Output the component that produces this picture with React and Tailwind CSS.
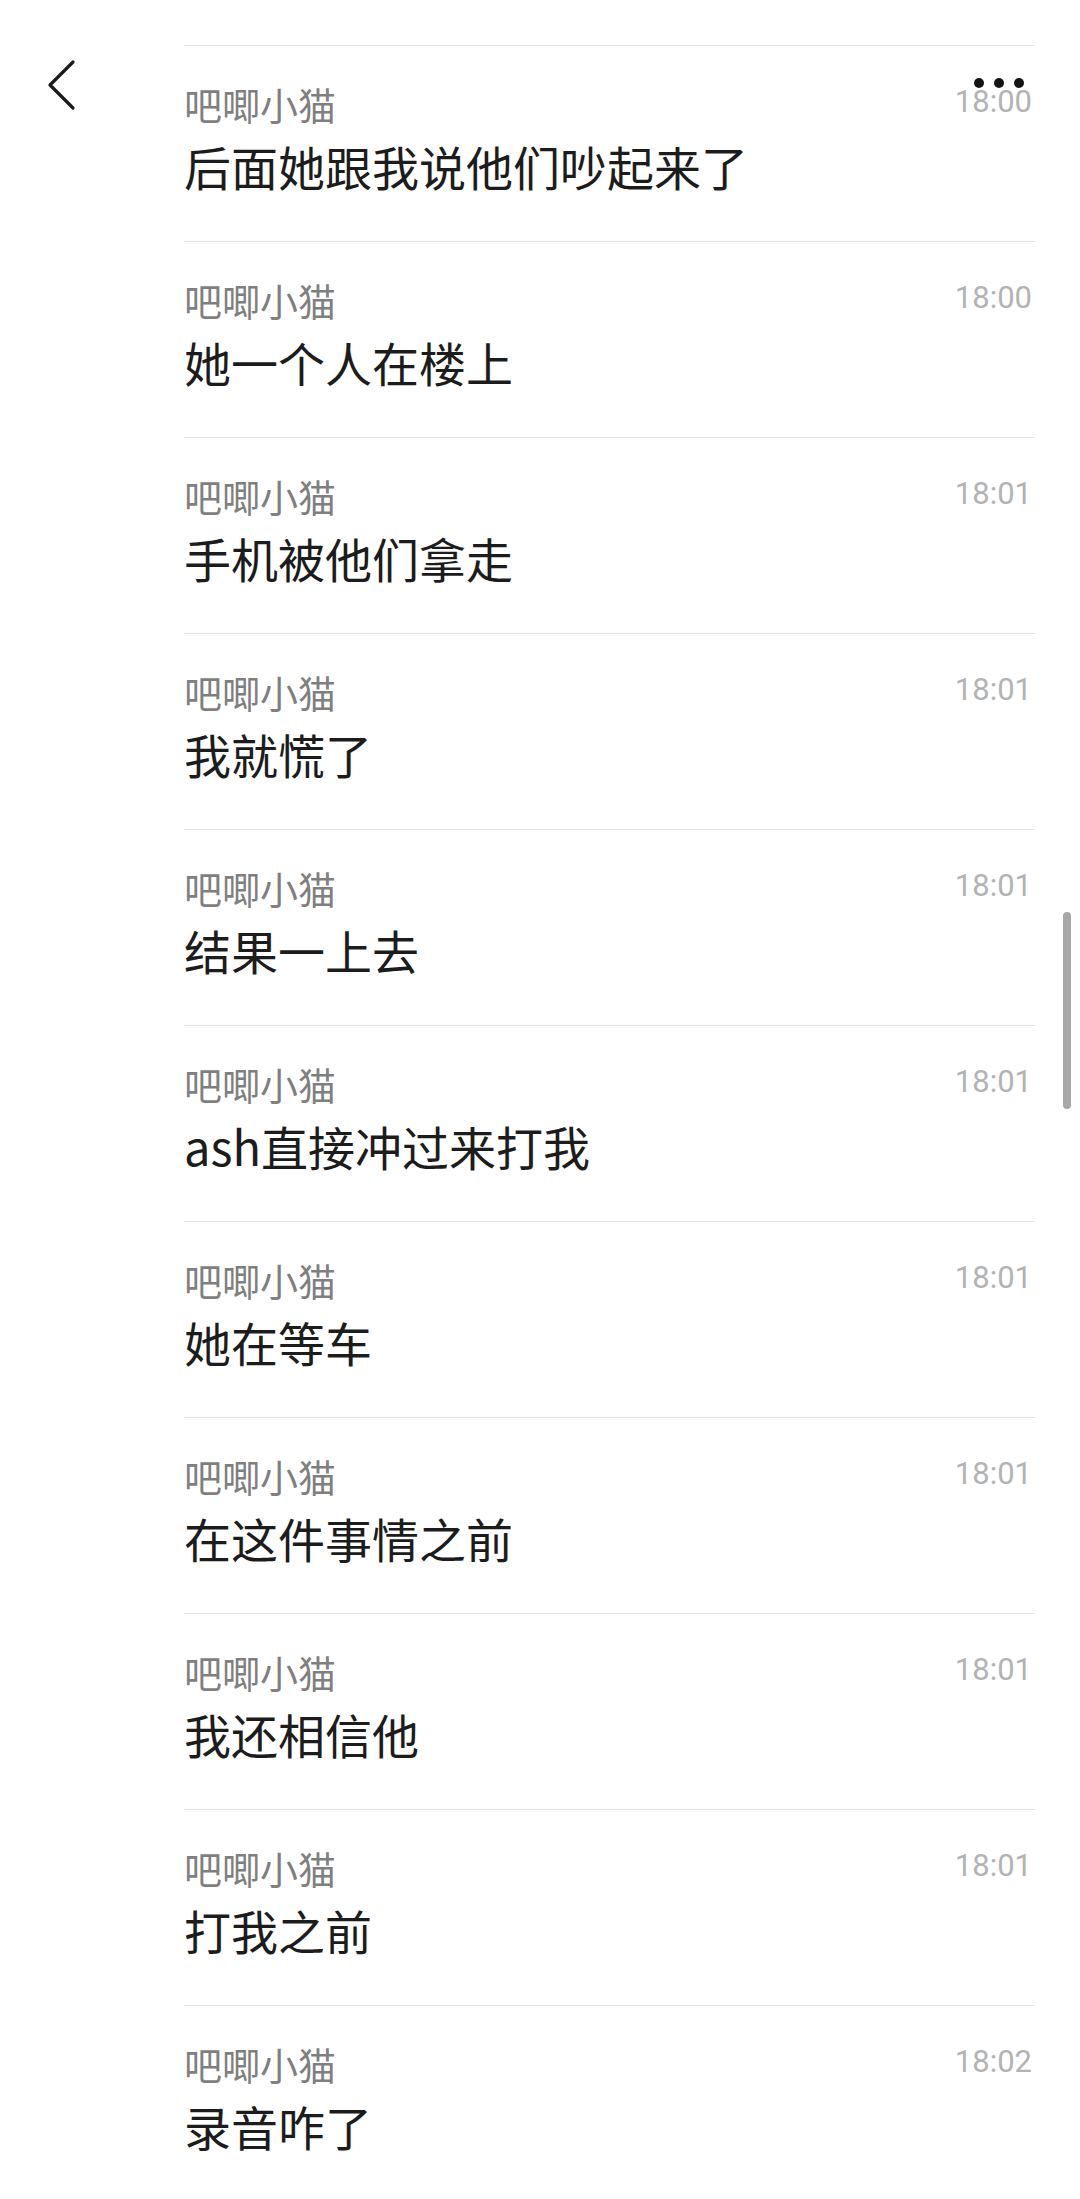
import React from 'react';

const messages = [
  { time: '18:00', text: '后面她跟我说他们吵起来了' },
  { time: '18:00', text: '她一个人在楼上' },
  { time: '18:01', text: '手机被他们拿走' },
  { time: '18:01', text: '我就慌了' },
  { time: '18:01', text: '结果一上去' },
  { time: '18:01', text: 'ash直接冲过来打我' },
  { time: '18:01', text: '她在等车' },
  { time: '18:01', text: '在这件事情之前' },
  { time: '18:01', text: '我还相信他' },
  { time: '18:01', text: '打我之前' },
  { time: '18:02', text: '录音咋了' },
];

function MessageRow({ time, text }) {
  return (
    <div className="h-[196px] border-t border-[#e5e5e5] pt-[36px]">
      <div className="flex justify-between items-start">
        <span className="text-[38px] leading-[44px] text-[#7f7f7f]">吧唧小猫</span>
        <span className="mt-[2px] pr-[3px] text-[31px] leading-[36px] text-[#b3b3b3] font-['Roboto',sans-serif]">
          {time}
        </span>
      </div>
      <div className="mt-3 text-[47px] leading-[56px] text-[#1c1c1c]">{text}</div>
    </div>
  );
}

export default function App() {
  return (
    <div className="relative w-[1080px] h-[2199px] overflow-hidden bg-white font-['Noto_Sans_CJK_SC','Noto_Sans',sans-serif]">
      <div className="ml-[184px] mr-[45px] pt-[45px]">
        {messages.map((m, i) => (
          <MessageRow key={i} time={m.time} text={m.text} />
        ))}
      </div>

      {/* header overlay */}
      <svg className="absolute left-[40px] top-[52px]" width="44" height="66" viewBox="0 0 44 66" fill="none">
        <path d="M33 10 L10 33 L33 56" stroke="#1a1a1a" strokeWidth="3.2" strokeLinecap="round" strokeLinejoin="round" />
      </svg>
      <div className="absolute left-[974px] top-[78px] flex gap-[10px]">
        <span className="w-[10px] h-[10px] rounded-full bg-[#141414]" />
        <span className="w-[10px] h-[10px] rounded-full bg-[#141414]" />
        <span className="w-[10px] h-[10px] rounded-full bg-[#141414]" />
      </div>

      {/* scroll indicator */}
      <div className="absolute left-[1063px] top-[912px] w-[8px] h-[197px] rounded-full bg-[#a8a8a8]" />
    </div>
  );
}
